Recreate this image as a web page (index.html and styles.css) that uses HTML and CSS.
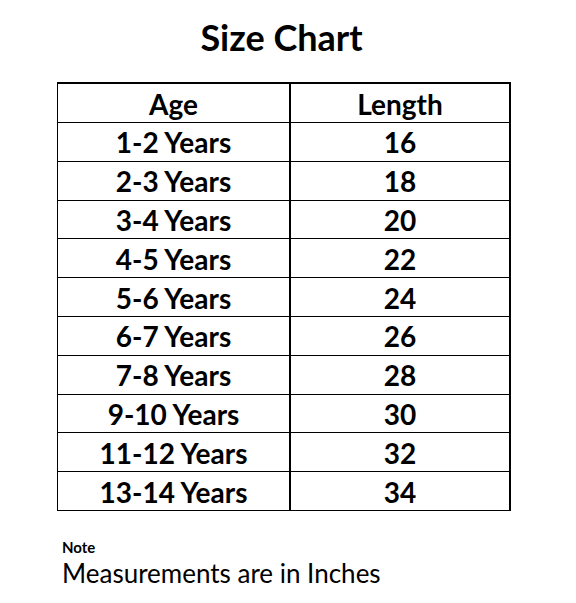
FILE: index.html
```html
<!DOCTYPE html>
<html>
<head>
<meta charset="utf-8">
<link rel="stylesheet" href="styles.css">
</head>
<body>
<div class="page">
  <h1 class="title">Size Chart</h1>
  <table class="chart">
    <thead>
      <tr><th class="age">Age</th><th class="len">Length</th></tr>
    </thead>
    <tbody>
      <tr><td class="age">1-2 Years</td><td class="len">16</td></tr>
      <tr><td class="age">2-3 Years</td><td class="len">18</td></tr>
      <tr><td class="age">3-4 Years</td><td class="len">20</td></tr>
      <tr><td class="age">4-5 Years</td><td class="len">22</td></tr>
      <tr><td class="age">5-6 Years</td><td class="len">24</td></tr>
      <tr><td class="age">6-7 Years</td><td class="len">26</td></tr>
      <tr><td class="age">7-8 Years</td><td class="len">28</td></tr>
      <tr><td class="age">9-10 Years</td><td class="len">30</td></tr>
      <tr><td class="age">11-12 Years</td><td class="len">32</td></tr>
      <tr><td class="age">13-14 Years</td><td class="len">34</td></tr>
    </tbody>
  </table>
  <div class="note">
    <div class="note-label">Note</div>
    <div class="note-text">Measurements are in Inches</div>
  </div>
</div>
</body>
</html>
```
FILE: styles.css
```css
html, body {
  margin: 0;
  padding: 0;
  background: #fff;
}
body {
  font-family: Lato, "Open Sans", sans-serif;
  color: #000;
}
.page {
  width: 576px;
  height: 603px;
  padding-top: 15px;
  box-sizing: border-box;
}
.title {
  margin: 0;
  font-size: 36px;
  font-weight: 700;
  line-height: 44px;
  text-align: center;
  padding-right: 13px;
}
.chart {
  margin: 23px 0 0 57px;
  border-collapse: collapse;
  width: 454px;
}
.chart th, .chart td {
  height: 36.8px;
  padding: 1px 0 0;
  font-size: 28px;
  font-weight: 700;
  text-align: center;
  line-height: 36px;
  border-top: 1px solid #000;
  border-bottom: 1px solid #000;
}
.chart thead th {
  border-top: 2px solid #000;
  height: 37px;
}
.chart .age {
  width: 231px;
  border-left: 1px solid #000;
  border-right: 2px solid #000;
}
.chart .len {
  border-right: 2px solid #000;
}
.note {
  padding: 27px 0 0 62px;
}
.note-label {
  font-size: 15px;
  font-weight: 700;
  line-height: 18px;
}
.note-text {
  font-size: 26px;
  font-weight: 400;
  line-height: 34px;
}
```
